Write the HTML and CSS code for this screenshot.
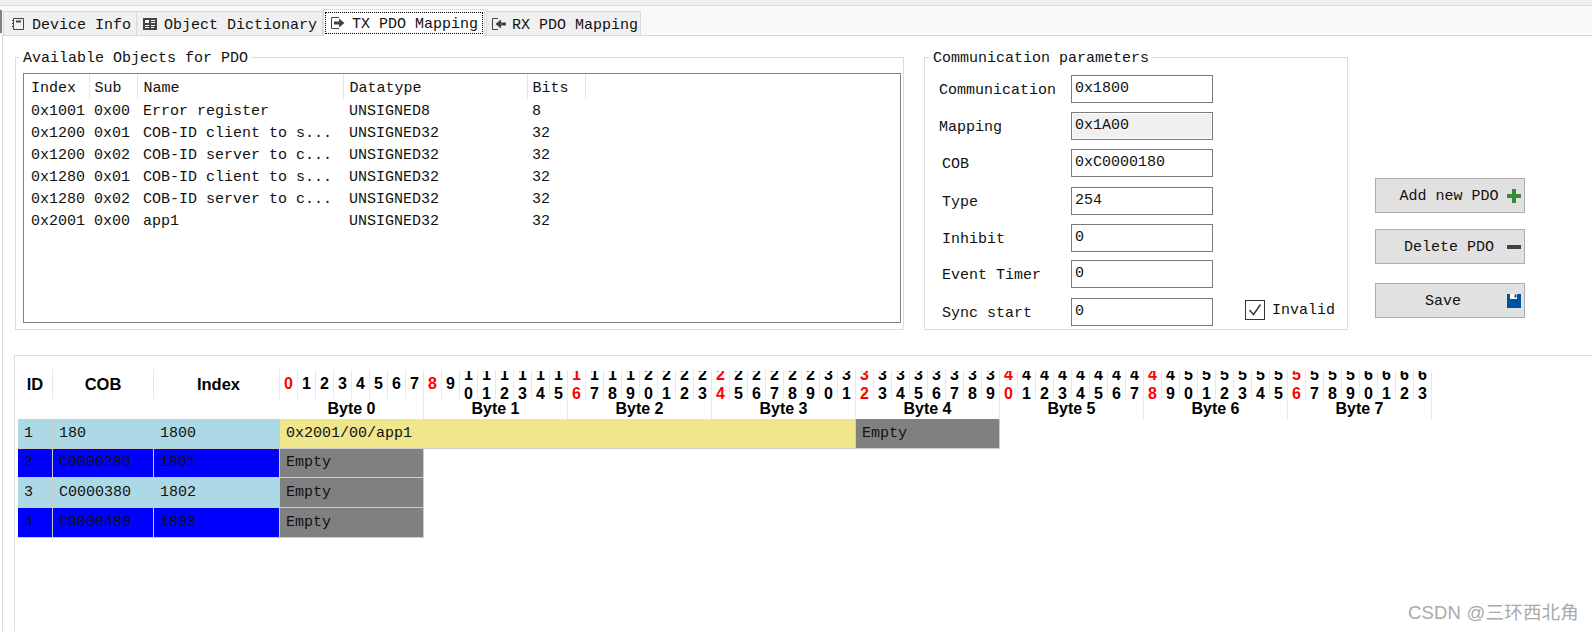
FILE: index.html
```html
<!DOCTYPE html>
<html>
  <head>
    <meta charset="utf-8">
    <title>TX PDO Mapping</title>
    <link rel="stylesheet" href="styles.css">
  </head>
  <body>
    <div class="topline"></div>

    <div class="tabstrip">
      <div class="edge"></div>
      <div class="tab tab-device">
        <svg class="tab-icon" viewBox="0 0 14 14"><path d="M2.5 1.5h10v11h-10z" fill="none" stroke="#444"/><path d="M5 3.5h5v2H5zM1 3h2v1H1zM1 6h2v1H1zM1 9h2v1H1z" fill="#444"/></svg>
        <span>Device Info</span>
      </div>
      <div class="tab">
        <svg class="tab-icon" viewBox="0 0 14 14"><path d="M0 1h14v12H0z" fill="#444"/><path d="M2 3h4v3H2zM8 3h4v1H8zM8 5h4v1H8zM2 8h4v1H2zM8 8h4v1H8zM2 10h4v1H2zM8 10h3v1H8z" fill="#fff"/></svg>
        <span>Object Dictionary</span>
      </div>
      <div class="tab tab-active">
        <div class="tab-focus">
          <svg class="tab-icon" viewBox="0 0 14 14"><path d="M8 1.5H.5v11H8" fill="none" stroke="#444"/><path d="M3 5.5h5V2.5L13.5 7 8 11.500V8.500H3z" fill="#444"/></svg>
          <span>TX PDO Mapping</span>
        </div>
      </div>
      <div class="tab tab-rx">
        <svg class="tab-icon" viewBox="0 0 14 14"><path d="M6 1.500H.5v11H6" fill="none" stroke="#444"/><path d="M14 5.500H9V2.500L3.500 7 9 11.500V8.500h5z" fill="#444"/></svg>
        <span>RX PDO Mapping</span>
      </div>
    </div>

    <div class="panel">
      <div class="top-row">
        <fieldset class="group group-objects">
          <legend>Available Objects for PDO</legend>
          <div class="listview">
            <table class="objects">
              <colgroup>
                <col class="col-index"><col class="col-sub"><col class="col-name"><col class="col-type"><col class="col-bits">
              </colgroup>
              <thead>
                <tr><th>Index</th><th>Sub</th><th>Name</th><th>Datatype</th><th>Bits</th></tr>
              </thead>
              <tbody>
                <tr><td>0x1001</td><td>0x00</td><td>Error register</td><td>UNSIGNED8</td><td>8</td></tr>
                <tr><td>0x1200</td><td>0x01</td><td>COB-ID client to s...</td><td>UNSIGNED32</td><td>32</td></tr>
                <tr><td>0x1200</td><td>0x02</td><td>COB-ID server to c...</td><td>UNSIGNED32</td><td>32</td></tr>
                <tr><td>0x1280</td><td>0x01</td><td>COB-ID client to s...</td><td>UNSIGNED32</td><td>32</td></tr>
                <tr><td>0x1280</td><td>0x02</td><td>COB-ID server to c...</td><td>UNSIGNED32</td><td>32</td></tr>
                <tr><td>0x2001</td><td>0x00</td><td>app1</td><td>UNSIGNED32</td><td>32</td></tr>
              </tbody>
            </table>
          </div>
        </fieldset>

        <fieldset class="group group-params">
          <legend>Communication parameters</legend>
          <div class="params">
            <div class="param"><label>Communication</label><input type="text" value="0x1800"></div>
            <div class="param"><label>Mapping</label><input type="text" value="0x1A00" class="readonly" readonly></div>
            <div class="param"><label class="inset">COB</label><input type="text" value="0xC0000180"></div>
            <div class="param"><label class="inset">Type</label><input type="text" value="254"></div>
            <div class="param"><label class="inset">Inhibit</label><input type="text" value="0"></div>
            <div class="param"><label class="inset">Event Timer</label><input type="text" value="0"></div>
            <div class="param">
              <label class="inset">Sync start</label><input type="text" value="0">
              <div class="invalid">
                <span class="checkbox"><svg viewBox="0 0 18 18"><path d="M3.500 9l4 4.500 7-10" fill="none" stroke="#333" stroke-width="1.400"/></svg></span>
                <span>Invalid</span>
              </div>
            </div>
          </div>
        </fieldset>

        <div class="actions">
          <button type="button" class="btn">
            <span class="btn-text">Add new PDO</span>
            <svg class="btn-icon" viewBox="0 0 14 14"><path d="M5 0h4v5h5v4H9v5H5V9H0V5h5z" fill="#388a34"/></svg>
          </button>
          <button type="button" class="btn">
            <span class="btn-text">Delete PDO</span>
            <svg class="btn-icon" viewBox="0 0 14 14"><path d="M0 5h14v4H0z" fill="#424242"/></svg>
          </button>
          <button type="button" class="btn btn-save">
            <span class="btn-text">Save</span>
            <svg class="btn-icon" viewBox="0 0 14 14"><path d="M0 0h14v14H0z" fill="#00539c"/><path d="M3 0h7v5H3z" fill="#fff"/><path d="M7.500 0.500h2v3h-2z" fill="#00539c"/></svg>
          </button>
        </div>
      </div>

      <div class="mapping">
        <div class="map">
          <div class="head">ID</div>
          <div class="head">COB</div>
          <div class="head head-index">Index</div>

          <div class="bit red">0</div><div class="bit">1</div><div class="bit">2</div><div class="bit">3</div><div class="bit">4</div><div class="bit">5</div><div class="bit">6</div><div class="bit">7</div>
          <div class="bit red">8</div><div class="bit">9</div><div class="bit">10</div><div class="bit">11</div><div class="bit">12</div><div class="bit">13</div><div class="bit">14</div><div class="bit">15</div>
          <div class="bit red">16</div><div class="bit">17</div><div class="bit">18</div><div class="bit">19</div><div class="bit">20</div><div class="bit">21</div><div class="bit">22</div><div class="bit">23</div>
          <div class="bit red">24</div><div class="bit">25</div><div class="bit">26</div><div class="bit">27</div><div class="bit">28</div><div class="bit">29</div><div class="bit">30</div><div class="bit">31</div>
          <div class="bit red">32</div><div class="bit">33</div><div class="bit">34</div><div class="bit">35</div><div class="bit">36</div><div class="bit">37</div><div class="bit">38</div><div class="bit">39</div>
          <div class="bit red">40</div><div class="bit">41</div><div class="bit">42</div><div class="bit">43</div><div class="bit">44</div><div class="bit">45</div><div class="bit">46</div><div class="bit">47</div>
          <div class="bit red">48</div><div class="bit">49</div><div class="bit">50</div><div class="bit">51</div><div class="bit">52</div><div class="bit">53</div><div class="bit">54</div><div class="bit">55</div>
          <div class="bit red">56</div><div class="bit">57</div><div class="bit">58</div><div class="bit">59</div><div class="bit">60</div><div class="bit">61</div><div class="bit">62</div><div class="bit">63</div>

          <div class="byte-spacer"></div>
          <div class="byte">Byte 0</div><div class="byte">Byte 1</div><div class="byte">Byte 2</div><div class="byte">Byte 3</div>
          <div class="byte">Byte 4</div><div class="byte">Byte 5</div><div class="byte">Byte 6</div><div class="byte">Byte 7</div>

          <div class="cell cell-id light">1</div><div class="cell light">180</div><div class="cell light">1800</div>
          <div class="cell mapped">0x2001/00/app1</div><div class="cell empty">Empty</div>

          <div class="cell cell-id blue">2</div><div class="cell blue">C0000280</div><div class="cell blue">1801</div>
          <div class="cell empty">Empty</div>

          <div class="cell cell-id light">3</div><div class="cell light">C0000380</div><div class="cell light">1802</div>
          <div class="cell empty">Empty</div>

          <div class="cell cell-id blue">4</div><div class="cell blue">C0000480</div><div class="cell blue">1803</div>
          <div class="cell empty">Empty</div>
        </div>
      </div>
    </div>

    <div class="watermark">CSDN @三环西北角</div>
  </body>
</html>
```

FILE: styles.css
```css
* {
  box-sizing: border-box;
}
html,
body {
  margin: 0;
  height: 631px;
  overflow: hidden;
}
body {
  position: relative;
  background: #fff;
  color: #111;
  font-family: "Liberation Mono", "DejaVu Sans Mono", monospace;
  font-size: 15px;
}

/* Window top and tab strip */
.topline {
  height: 6px;
  background: #f0f0f0;
  border-bottom: 1px solid #ddd;
}
.tabstrip {
  display: flex;
  align-items: flex-end;
  height: 29px;
  background: #f9f9f9;
}
.edge {
  width: 2px;
  height: 23px;
  margin: 0 1px 2px 0;
  background: #808080;
}
.tab {
  display: flex;
  align-items: center;
  gap: 7px;
  height: 24px;
  padding: 1px 5px 0 6px;
  background: #f0f0f0;
  border: 1px solid #d9d9d9;
  border-bottom: none;
}
.tab span {
  padding-top: 3px;
}
.tab + .tab {
  margin-left: -1px;
}
.tab-device {
  padding-left: 7px;
}
.tab-rx {
  gap: 6px;
  margin-left: 1px !important;
  padding: 1px 2px 0 5px;
}
.tab-icon {
  flex: none;
  width: 14px;
  height: 14px;
}
.tab-active {
  position: relative;
  height: 27px;
  margin-bottom: -1px;
  margin-left: 0 !important;
  padding: 2px 1px 3px;
  background: #fff;
}
.tab-focus {
  display: flex;
  align-items: center;
  gap: 7px;
  height: 22px;
  padding: 0 4px 0 5px;
  border: 1px dotted #000;
}

/* Main panel */
.panel {
  height: 596px;
  margin-left: 2px;
  border-top: 1px solid #d9d9d9;
  border-left: 1px solid #d9d9d9;
}
.top-row {
  display: flex;
  align-items: flex-start;
  padding: 13px 0 0 12px;
}
.group {
  height: 281px;
  margin: 0;
  padding: 0;
  min-width: 0;
  border: 1px solid #ddd;
}
.group legend {
  height: 16px;
  padding: 0 3px;
  line-height: 19px;
}
.group-objects {
  width: 889px;
}
.group-objects legend {
  margin-left: 4px;
}
.group-params {
  width: 424px;
  margin-left: 20px;
}
.group-params legend {
  margin-left: 5px;
}

/* Objects list */
.listview {
  width: 878px;
  height: 250px;
  margin: 8px 0 0 7px;
  border: 1px solid #828282;
}
.objects {
  table-layout: fixed;
  width: 561px;
  border-collapse: collapse;
  font: inherit;
}
.col-index {
  width: 65px;
}
.col-sub {
  width: 48px;
}
.col-name {
  width: 206px;
}
.col-type {
  width: 184px;
}
.col-bits {
  width: 58px;
}
.objects th {
  height: 25px;
  padding: 4px 0 0 6px;
  font-weight: normal;
  text-align: left;
  border-right: 1px solid #e5e5e5;
}
.objects td {
  height: 22px;
  padding: 3px 0 0 6px;
  white-space: nowrap;
  overflow: hidden;
}
.objects th:first-child,
.objects td:first-child {
  padding-left: 7px;
}
.objects th:nth-child(2),
.objects td:nth-child(2),
.objects th:last-child,
.objects td:last-child {
  padding-left: 5px;
}

/* Communication parameters */
.params {
  display: grid;
  grid-template-rows: 37px 37px 38px 37px 36px 38px 28px;
  margin-top: 10px;
}
.param {
  display: flex;
  align-items: flex-start;
  height: 28px;
}
.param label {
  flex: none;
  width: 146px;
  padding-left: 14px;
  line-height: 31px;
}
.param label.inset {
  padding-left: 17px;
}
.param input {
  flex: none;
  width: 142px;
  height: 28px;
  padding: 0 3px 1px;
  border: 1px solid #7a7a7a;
  border-radius: 0;
  outline: none;
  background: #fff;
  color: #111;
  font: inherit;
}
.param input.readonly {
  background: #f0f0f0;
  box-shadow: inset 0 0 0 1px #fff;
}
.invalid {
  display: flex;
  align-items: center;
  gap: 7px;
  height: 20px;
  margin: 2px 0 0 32px;
}
.invalid span:last-child {
  padding-top: 1px;
}
.checkbox {
  display: block;
  width: 20px;
  height: 20px;
  border: 1px solid #333;
  background: #fff;
}
.checkbox svg {
  display: block;
  width: 18px;
  height: 18px;
}

/* Buttons on the right */
.actions {
  display: flex;
  flex-direction: column;
  gap: 16px;
  margin-left: 27px;
  padding-top: 129px;
}
.btn {
  display: flex;
  align-items: center;
  width: 150px;
  height: 35px;
  padding: 0 3px 0 0;
  border: 1px solid #adadad;
  background: #e1e1e1;
  color: #111;
  font: inherit;
}
.btn-text {
  flex: 1;
  padding: 2px 0 0 15px;
  text-align: center;
  white-space: nowrap;
}
.btn-icon {
  flex: none;
  width: 14px;
  height: 14px;
}
.btn-save {
  margin-top: 3px;
}
.btn-save .btn-text {
  padding-left: 3px;
}

/* PDO mapping grid */
.mapping {
  height: 300px;
  margin: 25px 0 0 11px;
  padding: 13px 0 0 3px;
  border-top: 1px solid #ddd;
  border-left: 1px solid #ddd;
}
.map {
  display: grid;
  grid-template-columns: 35px 101px 126px repeat(64, 18px);
  grid-template-rows: 30px 20px 30px 29px 30px 30px;
}
.head,
.bit,
.byte {
  display: flex;
  align-items: center;
  justify-content: center;
  overflow: hidden;
  color: #000;
  font-family: "Liberation Sans", Arial, sans-serif;
  font-size: 16px;
  font-weight: bold;
  line-height: 18px;
  border-right: 1px solid #e8e8e8;
}
.head {
  font-size: 16.5px;
}
.head-index {
  padding-left: 4px;
}
/* two-digit numbers wrap in the narrow cell and get cut at the top */
.bit {
  padding-bottom: 3px;
  border-top: 2px solid #fff;
  font-kerning: none;
  line-height: 19px;
  text-align: center;
  word-break: break-all;
}
.red {
  color: #f00;
}
.byte-spacer {
  grid-column: span 3;
}
.byte {
  grid-column: span 8;
}
.cell {
  display: flex;
  align-items: center;
  padding: 0 0 1px 6px;
  color: #111;
  white-space: nowrap;
  overflow: hidden;
  border-right: 1px solid #ccc;
  border-bottom: 1px solid #ccc;
}
.cell-id {
  grid-column: 1;
}
.light {
  background: #add8e6;
}
.blue {
  background: #00f;
}
.mapped {
  grid-column: span 32;
  background: #f0e68c;
}
.empty {
  grid-column: span 8;
  background: #808080;
}

/* Site watermark over the picture */
.watermark {
  position: absolute;
  right: 13px;
  top: 602px;
  color: #aaa;
  font-family: "Liberation Sans", "Noto Sans CJK SC", sans-serif;
  font-size: 18.5px;
  letter-spacing: 0.2px;
  line-height: 22px;
  white-space: nowrap;
}
```
